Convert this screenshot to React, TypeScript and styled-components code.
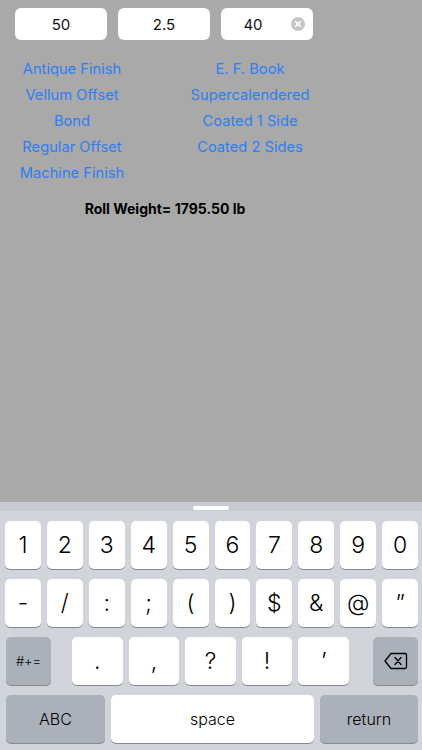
import React from 'react';
import styled, { createGlobalStyle } from 'styled-components';

const GlobalStyle = createGlobalStyle`
  html, body {
    margin: 0;
    padding: 0;
    height: 100%;
  }
  body {
    font-family: Inter, "Liberation Sans", sans-serif;
    background: #a9a9a9;
  }
  #root {
    height: 100%;
  }
`;

const Screen = styled.div`
  display: flex;
  flex-direction: column;
  height: 750px;
  width: 422px;
  overflow: hidden;
`;

const Content = styled.div`
  flex: 1;
  background: #a9a9a9;
  display: flex;
  flex-direction: column;
`;

const FieldRow = styled.div`
  display: flex;
  gap: 11px;
  padding: 8px 0 0 15px;
`;

const Field = styled.div<{ $clear?: boolean }>`
  position: relative;
  width: 92px;
  height: 32px;
  box-sizing: border-box;
  background: #ffffff;
  border-radius: 6px;
  display: flex;
  align-items: center;
  justify-content: center;
  padding-right: ${p => (p.$clear ? '28px' : '0')};
  font-size: 15px;
  color: #111;
`;

const ClearButton = styled.span`
  position: absolute;
  right: 8px;
  top: 9px;
  width: 14px;
  height: 14px;
  display: flex;
`;

const TypeGrid = styled.div`
  display: grid;
  grid-template-columns: 144px 144px;
  column-gap: 34px;
  grid-auto-rows: 26px;
  margin-top: 16px;
`;

const TypeLink = styled.div`
  display: flex;
  align-items: center;
  justify-content: center;
  font-size: 14.7px;
  line-height: 26px;
  color: #2f7ef4;
  white-space: nowrap;
`;

const Result = styled.div`
  width: 330px;
  margin-top: 13px;
  line-height: 20px;
  text-align: center;
  font-size: 14px;
  font-weight: 700;
  color: #000;
`;

const Keyboard = styled.div`
  height: 248px;
  background: #d1d4da;
  display: flex;
  flex-direction: column;
  box-sizing: border-box;
  padding-bottom: 5px;
`;

const KeyboardTop = styled.div`
  height: 9px;
  background: #c7ccd3;
  display: flex;
  justify-content: center;
  padding-top: 4px;
  box-sizing: border-box;
  margin-bottom: 10px;
`;

const Handle = styled.div`
  width: 36px;
  height: 4px;
  border-radius: 2px;
  background: #ffffff;
`;

const KeyRow = styled.div<{ $pad?: string }>`
  display: flex;
  gap: 6px;
  height: 48px;
  padding: ${p => p.$pad || '0 4px 0 5px'};
  margin-bottom: 10px;
  &:last-child {
    margin-bottom: 0;
  }
`;

const Key = styled.div<{ $dark?: boolean; $w?: number; $size?: number }>`
  flex: ${p => (p.$w ? `0 0 ${p.$w}px` : '1')};
  background: ${p => (p.$dark ? '#abb1ba' : '#ffffff')};
  border-radius: 5px;
  box-shadow: 0 1px 0 #898a8d;
  display: flex;
  align-items: center;
  justify-content: center;
  font-size: ${p => p.$size || 23}px;
  font-weight: 300;
  color: #000;
`;

const MiddleKeys = styled.div`
  flex: 1;
  display: flex;
  gap: 6px;
  margin: 0 18px 0 15px;
`;

const ClearIcon = () => (
  <svg width="14" height="14" viewBox="0 0 14 14">
    <circle cx="7" cy="7" r="7" fill="#c5c5c9" />
    <path d="M4.6 4.6 L9.4 9.4 M9.4 4.6 L4.6 9.4" stroke="#fff" strokeWidth="1.6" strokeLinecap="round" />
  </svg>
);

const DeleteIcon = () => (
  <svg width="24" height="18" viewBox="0 0 24 18">
    <path
      d="M7 1.5 H21 a1.5 1.5 0 0 1 1.5 1.5 V15 a1.5 1.5 0 0 1 -1.5 1.5 H7 L1 9 Z"
      fill="none"
      stroke="#000"
      strokeWidth="1.3"
      strokeLinejoin="round"
    />
    <path d="M11 5.5 L17 12.5 M17 5.5 L11 12.5" stroke="#000" strokeWidth="1.3" strokeLinecap="round" />
  </svg>
);

const leftTypes = ['Antique Finish', 'Vellum Offset', 'Bond', 'Regular Offset', 'Machine Finish'];
const rightTypes = ['E. F. Book', 'Supercalendered', 'Coated 1 Side', 'Coated 2 Sides'];

const numberKeys = ['1', '2', '3', '4', '5', '6', '7', '8', '9', '0'];
const symbolKeys = ['-', '/', ':', ';', '(', ')', '$', '&', '@', '\u201D'];
const punctKeys = ['.', ',', '?', '!', '\u2019'];

const App: React.FC = () => {
  const cells: React.ReactNode[] = [];
  leftTypes.forEach((name, i) => {
    cells.push(<TypeLink key={`l${i}`}>{name}</TypeLink>);
    cells.push(<TypeLink key={`r${i}`}>{rightTypes[i] || ''}</TypeLink>);
  });

  return (
    <Screen>
      <GlobalStyle />
      <Content>
        <FieldRow>
          <Field>50</Field>
          <Field>2.5</Field>
          <Field $clear>
            40
            <ClearButton>
              <ClearIcon />
            </ClearButton>
          </Field>
        </FieldRow>

        <TypeGrid>{cells}</TypeGrid>

        <Result>Roll Weight= 1795.50 lb</Result>
      </Content>

      <Keyboard>
        <KeyboardTop>
          <Handle />
        </KeyboardTop>
        <KeyRow>
          {numberKeys.map(k => (
            <Key key={k}>{k}</Key>
          ))}
        </KeyRow>
        <KeyRow>
          {symbolKeys.map(k => (
            <Key key={k}>{k}</Key>
          ))}
        </KeyRow>
        <KeyRow $pad="0 4px 0 6px">
          <Key $dark $w={45} $size={13}>#+=</Key>
          <MiddleKeys>
            {punctKeys.map(k => (
              <Key key={k}>{k}</Key>
            ))}
          </MiddleKeys>
          <Key $dark $w={45}>
            <DeleteIcon />
          </Key>
        </KeyRow>
        <KeyRow $pad="0 4px 0 6px">
          <Key $dark $w={99} $size={16}>ABC</Key>
          <Key $size={16}>space</Key>
          <Key $dark $w={98} $size={16}>return</Key>
        </KeyRow>
      </Keyboard>
    </Screen>
  );
};

export default App;
